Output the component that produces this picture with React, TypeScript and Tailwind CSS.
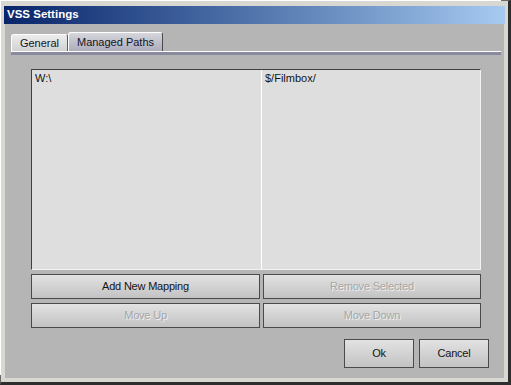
export default function App() {
  const font = { fontFamily: '"Liberation Sans", Arial, sans-serif' };
  const btn =
    "h-[25px] border border-[#4a4a4a] bg-gradient-to-b from-[#e2e2e2] to-[#c3c3c3] text-[11px] tracking-[-0.2px] flex items-center justify-center";
  const off = "text-[#a6a6a6] [text-shadow:1px_1px_0_#efefef]";
  const on = "text-[#141414]";

  return (
    <div className="w-[511px] h-[385px] border-l border-t border-[#6a6a6a] border-r-[3px] border-b-[3px] border-r-[#2e2e2e] border-b-[#2e2e2e] bg-[#d9d7d1]" style={font}>
      <div className="h-full flex flex-col border-[4px] border-[#d9d7d1] shadow-[-4px_-4px_0_-3px_#ffffff]">
        <div className="h-[19px] pt-px bg-[#d9d7d1]">
          <div className="h-[18px] -mx-px bg-gradient-to-r from-[#0a246a] to-[#a6caf0] flex items-center pl-[3px]">
            <span className="text-white font-bold text-[11.5px]">VSS Settings</span>
          </div>
        </div>
        <div className="flex-1 bg-[#b5b5b5] flex flex-col">
          <div className="flex items-end pl-[6px] mt-[8px] h-[19px]">
            <div className="h-[17px] w-[57px] rounded-t-[3px] border-t border-l border-white border-r border-r-[#5a5a5a] bg-gradient-to-b from-[#ececec] to-[#d2d2d2] flex items-center justify-center text-[11px] text-[#141428]">
              General
            </div>
            <div className="h-[19px] w-[95px] rounded-t-[3px] border-t border-l border-white border-r border-r-[#4a4a4a] bg-gradient-to-b from-[#d6d6dc] to-[#acacbc] flex items-center justify-center text-[11px] text-[#141428] pt-px">
              Managed Paths
            </div>
          </div>
          <div className="ml-[6px] w-[490px] border-t border-white h-[4px] bg-[#8a8a9e]" />
          <div className="ml-[26px] mt-[14px] w-[450px] h-[201px] border border-t-[#404040] border-l-[#404040] border-b-[#f2f2f2] border-r-[#f2f2f2] bg-[#dedede] flex text-[11px] text-[#141414] leading-[13px]">
            <div className="w-[230px] border-r border-white pt-[2px] px-[3px]">W:\</div>
            <div className="flex-1 pt-[2px] px-[3px]">$/Filmbox/</div>
          </div>
          <div className="ml-[26px] mt-[4px] w-[450px] grid grid-cols-[229px_218px] gap-x-[3px] gap-y-[4px]">
            <div className={`${btn} ${on}`}>Add New Mapping</div>
            <div className={`${btn} ${off}`}>Remove Selected</div>
            <div className={`${btn} ${off}`}>Move Up</div>
            <div className={`${btn} ${off}`}>Move Down</div>
          </div>
          <div className="mt-[11px] flex justify-end gap-[5px] pr-[15px]">
            <div className={`${btn} ${on} h-[29px] w-[70px]`}>Ok</div>
            <div className={`${btn} ${on} h-[29px] w-[70px]`}>Cancel</div>
          </div>
        </div>
      </div>
    </div>
  );
}
